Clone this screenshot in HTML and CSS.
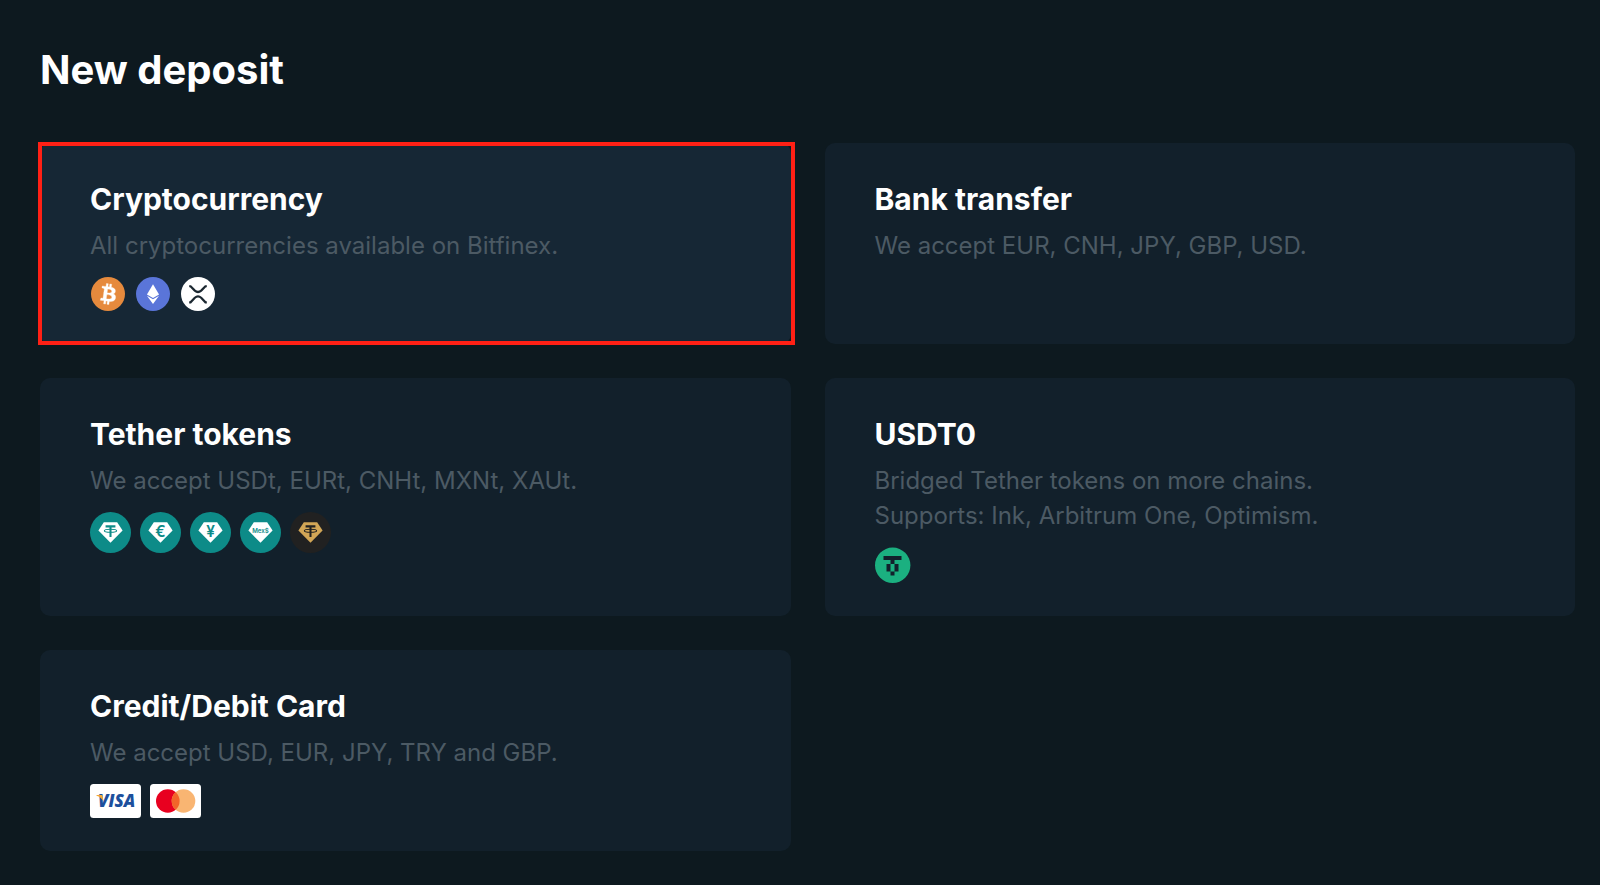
FILE: index.html
```
<!DOCTYPE html>
<html lang="en">
<head>
<meta charset="utf-8">
<meta name="viewport" content="width=device-width, initial-scale=1">
<title>New deposit</title>
<link rel="stylesheet" href="styles.css">
</head>
<body>
<main class="page">
  <h1 class="page-title">New deposit</h1>
  <div class="methods">
    <a class="method method-active" href="#cryptocurrency">
      <h2 class="method-title">Cryptocurrency</h2>
      <p class="method-text">All cryptocurrencies available on Bitfinex.</p>
      <div class="icons icons-coins">
        <svg class="coin" viewBox="0 0 32 32" role="img" aria-label="Bitcoin"><circle cx="16" cy="16" r="16" fill="#e68a3d"/><path fill="#fff" stroke="#fff" stroke-width=".3" transform="rotate(-6 16 16)" d="M23.189 14.02c.314-2.096-1.283-3.223-3.465-3.975l.708-2.84-1.728-.43-.69 2.765c-.454-.114-.92-.22-1.385-.326l.695-2.783L15.596 6l-.708 2.839c-.376-.086-.746-.17-1.104-.26l.002-.009-2.384-.595-.46 1.846s1.283.294 1.256.312c.7.175.826.638.805 1.006l-.806 3.235c.048.012.11.03.18.057l-.183-.045-1.13 4.532c-.086.212-.303.531-.793.41.018.025-1.256-.313-1.256-.313l-.858 1.978 2.25.561c.418.105.828.215 1.231.318l-.715 2.872 1.727.43.708-2.84c.472.127.93.245 1.378.357l-.706 2.828 1.728.43.715-2.866c2.948.558 5.164.333 6.097-2.333.752-2.146-.037-3.385-1.588-4.192 1.13-.26 1.98-1.003 2.207-2.538zm-3.95 5.538c-.533 2.147-4.148.986-5.32.695l.95-3.805c1.172.293 4.929.872 4.37 3.11zm.535-5.569c-.487 1.953-3.495.96-4.47.717l.86-3.45c.975.243 4.118.696 3.61 2.733z"/></svg>
        <svg class="coin" viewBox="0 0 32 32" role="img" aria-label="Ethereum"><circle cx="16" cy="16" r="16" fill="#5a75d9"/><path fill="#fff" d="M16 6.800 21.700 16.400 16 19.700 10.300 16.400z"/><path fill="#fff" d="M10.300 17.700 16 21 21.700 17.700 16 25.400z"/></svg>
        <svg class="coin" viewBox="0 0 32 32" role="img" aria-label="XRP"><circle cx="16" cy="16" r="16" fill="#fff"/><path fill="none" stroke="#1b2730" stroke-width="2.100" d="M7.700 8.700h1.300l4 4.100q3 2.600 6 0l4-4.100h1.300M7.700 23.800h1.300l4-4.300q3-2.600 6 0l4 4.300h1.300"/></svg>
      </div>
    </a>

    <a class="method" href="#bank-transfer">
      <h2 class="method-title">Bank transfer</h2>
      <p class="method-text">We accept EUR, CNH, JPY, GBP, USD.</p>
    </a>

    <a class="method" href="#tether-tokens">
      <h2 class="method-title">Tether tokens</h2>
      <p class="method-text">We accept USDt, EURt, CNHt, MXNt, XAUt.</p>
      <div class="icons">
        <svg class="token" viewBox="0 0 40 40" role="img" aria-label="USDt"><circle class="teal" cx="20" cy="20" r="20"/><path class="gem" d="M13.500 10h13l5.300 8L20 30 8.200 18z"/><g fill="none" stroke="#0d8b88"><path stroke-width="2" d="M15.200 14h9.600M20 14v10.500"/><ellipse cx="20" cy="18.300" rx="6" ry="1.500" stroke-width="1"/></g></svg>
        <svg class="token" viewBox="0 0 40 40" role="img" aria-label="EURt"><circle class="teal" cx="20" cy="20" r="20"/><path class="gem" d="M13.500 10h13l5.300 8L20 30 8.200 18z"/><text class="sign" x="20" y="24">€</text></svg>
        <svg class="token" viewBox="0 0 40 40" role="img" aria-label="CNHt"><circle class="teal" cx="20" cy="20" r="20"/><path class="gem" d="M13.500 10h13l5.300 8L20 30 8.200 18z"/><text class="sign" x="20" y="24">¥</text></svg>
        <svg class="token" viewBox="0 0 40 40" role="img" aria-label="MXNt"><circle class="teal" cx="20" cy="20" r="20"/><path class="gem" d="M13.500 10h13l5.300 8L20 30 8.200 18z"/><text class="sign sign-small" x="20" y="20">Mex$</text></svg>
        <svg class="token" viewBox="0 0 40 40" role="img" aria-label="XAUt"><circle cx="20" cy="20" r="20" fill="#212121"/><path fill="#d2a656" d="M13.500 10h13l5.300 8L20 30 8.200 18z"/><g fill="none" stroke="#212121"><path stroke-width="2" d="M15.200 14h9.600M20 14v10.500"/><ellipse cx="20" cy="18.300" rx="6" ry="1.500" stroke-width="1"/></g></svg>
      </div>
    </a>

    <a class="method" href="#usdt0">
      <h2 class="method-title">USDT0</h2>
      <p class="method-text">Bridged Tether tokens on more chains.<br>Supports: Ink, Arbitrum One, Optimism.</p>
      <div class="icons">
        <svg class="usdt0" viewBox="0 0 36 36" role="img" aria-label="USDT0"><circle cx="17.700" cy="18.300" r="17.700" fill="#1bb080"/><path fill="#12202b" d="M8.500 9h18v4H19.500v4h-4v-4h-7zM11.500 17h4v7.500h-4zM19.500 17h4v7.500h-4zM15.500 24.500h4v4h-4z"/></svg>
      </div>
    </a>

    <a class="method" href="#card">
      <h2 class="method-title">Credit/Debit Card</h2>
      <p class="method-text">We accept USD, EUR, JPY, TRY and GBP.</p>
      <div class="icons">
        <svg class="card-logo" viewBox="0 0 51 34" role="img" aria-label="Visa"><rect width="51" height="34" rx="3.500" fill="#fff"/><text class="visa" x="8" y="23">VISA</text><path fill="#f2a735" d="M6.500 11h5q.9 0 1.100 1l.7 5q-2.300-4-6.800-5.300z"/></svg>
        <svg class="card-logo" viewBox="0 0 51 34" role="img" aria-label="Mastercard"><rect width="51" height="34" rx="3.500" fill="#fff"/><circle cx="17.800" cy="17" r="11.800" fill="#e8001f"/><circle cx="33.500" cy="17" r="11.800" fill="#f9b572"/><path fill="#f26529" d="M25.650 8.200a11.800 11.800 0 0 1 0 17.600a11.800 11.800 0 0 1 0-17.600z"/></svg>
      </div>
    </a>
  </div>
</main>
</body>
</html>
```
FILE: styles.css
```
* {
  box-sizing: border-box;
}

body {
  margin: 0;
  background: #0d191f;
  color: #fff;
  font-family: Inter, "Liberation Sans", sans-serif;
}

.page {
  padding: 45px 25px 34px 40px;
}

.page-title {
  margin: 0 0 48px;
  font-size: 40px;
  line-height: 50px;
  font-weight: 700;
}

.methods {
  display: grid;
  grid-template-columns: repeat(2, minmax(0, 1fr));
  gap: 34px;
}

.method {
  position: relative;
  padding: 33px 50px;
  border-radius: 10px;
  background: #12202b;
  color: inherit;
  text-decoration: none;
}

.method-active {
  background: #162735;
}

.method-active::after {
  content: "";
  position: absolute;
  inset: -1px -4px -1px -2px;
  border: 4px solid #ff2015;
}

.method-title {
  margin: 0 0 6px;
  font-size: 30px;
  line-height: 46px;
  font-weight: 700;
}

.method-text {
  margin: 0;
  color: #4c5a64;
  font-size: 24px;
  line-height: 35px;
}

.icons {
  display: flex;
  gap: 9px;
  margin-top: 14px;
}

.icons-coins {
  gap: 11px;
  padding-left: 1px;
}

.coin {
  width: 34px;
  height: 34px;
}

.token {
  width: 41px;
  height: 41px;
}

.usdt0 {
  width: 36px;
  height: 36px;
}

.card-logo {
  width: 51px;
  height: 34px;
}

.teal {
  fill: #0d8b88;
}

.gem {
  fill: #fff;
}

.sign {
  fill: #0d8b88;
  font-size: 15px;
  font-weight: 600;
  text-anchor: middle;
}

.sign-small {
  font-size: 6px;
}

.visa {
  fill: #1c4f9c;
  font-family: "Open Sans", sans-serif;
  font-size: 17px;
  font-style: italic;
  font-weight: 800;
}
```
